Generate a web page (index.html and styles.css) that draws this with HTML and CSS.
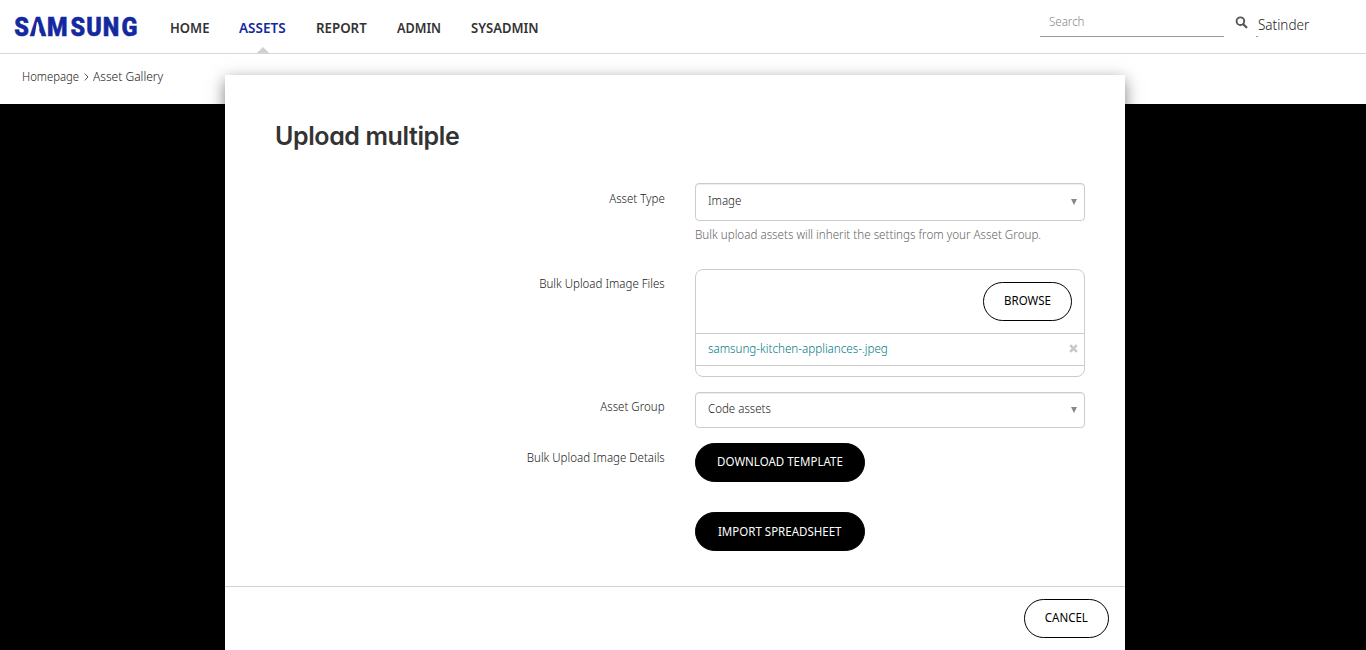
FILE: index.html
```html
<!DOCTYPE html>
<html lang="en">
<head>
<meta charset="utf-8">
<title>Upload multiple</title>
<link rel="stylesheet" href="styles.css">
</head>
<body>
<header class="topbar">
  <svg class="logo" width="123" height="22" viewBox="0 0 123 22" role="img" aria-label="Samsung">
    <text class="logo-text" transform="scale(.9 1)" x="-0.8 16.8 35.6 61.8 79.3 97.5 118.4" y="20">SAMSUNG</text>
    <polygon class="logo-gap" points="21.9,6 22.9,6 25.6,21 19.4,21"/>
  </svg>
  <nav class="nav">
    <a class="nav-home"><span>HOME</span></a>
    <a class="nav-assets active"><span>ASSETS</span></a>
    <a class="nav-report"><span>REPORT</span></a>
    <a class="nav-admin"><span>ADMIN</span></a>
    <a class="nav-sys"><span>SYSADMIN</span></a>
  </nav>
  <div class="search"><span>Search</span></div>
  <svg class="search-icon" width="13" height="13" viewBox="0 0 13 13"><circle cx="5.4" cy="5.2" r="3.8" fill="none" stroke="#555" stroke-width="1.9"/><path d="M8.2 8.2l3.2 3.1" stroke="#555" stroke-width="2.2" stroke-linecap="round"/></svg>
  <div class="user"><span>Satinder</span></div>
</header>
<div class="crumbs"><span class="crumb-home">Homepage</span><svg width="5" height="8" viewBox="0 0 5 8"><path d="M.8.6L4 4 .8 7.4" fill="none" stroke="#555"/></svg><span class="crumb-page">Asset Gallery</span></div>
<main class="stage"></main>
<section class="modal">
  <h1 class="title">Upload multiple</h1>
  <form class="form">
    <label class="label l-type"><span>Asset Type</span></label>
    <div class="field f-type">
      <div class="select select-tall"><span class="v-image">Image</span><i class="caret"></i></div>
      <p class="hint"><span>Bulk upload assets will inherit the settings from your Asset Group.</span></p>
    </div>
    <label class="label l-files"><span>Bulk Upload Image Files</span></label>
    <div class="field uploader">
      <div class="browse-row"><button type="button" class="pill outline browse"><span>BROWSE</span></button></div>
      <div class="file-row"><span class="file">samsung-kitchen-appliances-.jpeg</span><svg width="9" height="9" viewBox="0 0 9 9"><path d="M1.2 1.2l6.6 6.6M7.8 1.2L1.2 7.8" stroke="#c8c8c8" stroke-width="2.6"/></svg></div>
    </div>
    <label class="label l-group"><span>Asset Group</span></label>
    <div class="field select"><span class="v-group">Code assets</span><i class="caret"></i></div>
    <label class="label l-details"><span>Bulk Upload Image Details</span></label>
    <div class="field actions">
      <button type="button" class="pill solid"><span class="b-download">DOWNLOAD TEMPLATE</span></button>
      <button type="button" class="pill solid"><span class="b-import">IMPORT SPREADSHEET</span></button>
    </div>
  </form>
  <footer class="footer"><button type="button" class="pill outline cancel"><span>CANCEL</span></button></footer>
</section>
</body>
</html>
```
FILE: styles.css
```css
* { box-sizing: border-box; }
body {
  margin: 0;
  height: 650px;
  position: relative;
  overflow: hidden;
  display: flex;
  flex-direction: column;
  background: #fff;
  color: #222;
  font-family: "Noto Sans", "Open Sans", sans-serif;
  font-weight: 350;
  font-size: 13px;
  line-height: 18px;
}
/* condensed lettering */
span { display: inline-block; white-space: nowrap; transform: scaleX(.886); transform-origin: 0 50%; }
.topbar {
  height: 54px;
  flex: none;
  display: flex;
  align-items: flex-start;
  border-bottom: 1px solid #d5d8d8;
}
.logo { margin: 16px 0 0 15px; flex: none; overflow: visible; }
.logo-text { font: 900 26px Roboto, sans-serif; fill: #1428a0; stroke: #1428a0; stroke-width: .5px; }
.logo-gap { fill: #fff; }
.nav { display: flex; gap: 30px; margin-left: 32px; height: 53px; font-size: 14px; font-weight: 600; line-height: 56px; width: 870px; color: #333; }
.nav a { position: relative; }
.nav span { transform: scaleX(.93); }
.nav-home { width: 39px; }
.nav-assets { width: 47px; }
.nav-assets span { transform: scaleX(.965); }
.nav-report { width: 51px; }
.nav-report span { transform: scaleX(.95); }
.nav-admin { width: 44px; }
.nav-admin span { transform: scaleX(.9); }
.nav .active { color: #1428a0; }
.nav .active::after {
  content: "";
  position: absolute;
  left: 50%;
  bottom: 0;
  margin-left: -6px;
  border: 6px solid transparent;
  border-top: 0;
  border-bottom-color: #cdd1d1;
}
.search { flex: none; width: 184px; height: 37px; padding: 12px 9px 0; border-bottom: 1px solid #999; color: #888; }
.search-icon { flex: none; margin: 16px 0 0 11px; }
.user { position: relative; margin: 14px 0 0 10px; font-size: 15px; line-height: 20px; }
.user span { transform: scaleX(.9); }
.user::after { content: ""; position: absolute; left: -2px; top: 22px; width: 2px; height: 1px; background: #999; }
.crumbs { flex: none; height: 50px; padding: 13px 0 0 22px; display: flex; }
.crumb-home { width: 57px; transform: scaleX(.87); }
.crumb-page { transform: scaleX(.925); }
.crumbs svg { margin: 6px 4px 0 5px; }
.stage { flex: 1; background: #000; }
.modal {
  position: absolute;
  left: 225px;
  top: 75px;
  width: 900px;
  height: 575px;
  background: #fff;
  box-shadow: 0 5px 15px rgba(0, 0, 0, .5);
}
.title { margin: 0; padding: 45px 50px 0; height: 108px; font: 600 25px/32px Inter, sans-serif; color: #333; letter-spacing: -.4px; font-feature-settings: "cv11"; }
.form {
  display: grid;
  grid-template-columns: 440px 390px;
  grid-template-rows: 86px 123px 51px 143px;
  column-gap: 30px;
}
.label { text-align: right; padding-top: 6px; }
.label span { transform-origin: 100% 50%; }
.l-files, .l-group, .l-details { padding-top: 5px; }
.select {
  display: flex;
  justify-content: space-between;
  align-items: center;
  height: 36px;
  padding: 0 7px 4px 12px;
  border: 1px solid #ccc;
  border-radius: 4px;
  box-shadow: inset 0 1px 1px rgba(0, 0, 0, .075);
}
.select-tall { height: 38px; }
.caret { width: 0; border: 3px solid transparent; border-top: 6px solid #888; border-bottom: 0; margin-top: 3px; }
.hint { margin: 4px 0 0; color: #666; }
.hint span, .file { transform: scaleX(.894); }
.uploader { height: 108px; border: 1px solid #ccc; border-radius: 8px; }
.browse-row { height: 63px; padding: 12px; display: flex; justify-content: flex-end; }
.pill { display: flex; align-items: center; justify-content: center; height: 39px; border-radius: 20px; padding: 0 0 3px; font: inherit; border: 1px solid #000; font-weight: 400; }
.pill span { transform-origin: 50% 50%; }
.outline { background: #fff; color: #000; }
.solid { background: #000; color: #fff; width: 170px; }
.solid .b-import { position: relative; top: 1px; }
.browse { width: 89px; }
.cancel { width: 85px; }
.file-row { height: 33px; border: solid #ccc; border-width: 1px 0; display: flex; justify-content: space-between; align-items: center; padding: 0 6px 3px 12px; color: #007a87; }
.actions { display: flex; flex-direction: column; gap: 30px; }
.footer { border-top: 1px solid #d2d2d2; padding: 12px 16px; display: flex; justify-content: flex-end; }
```
